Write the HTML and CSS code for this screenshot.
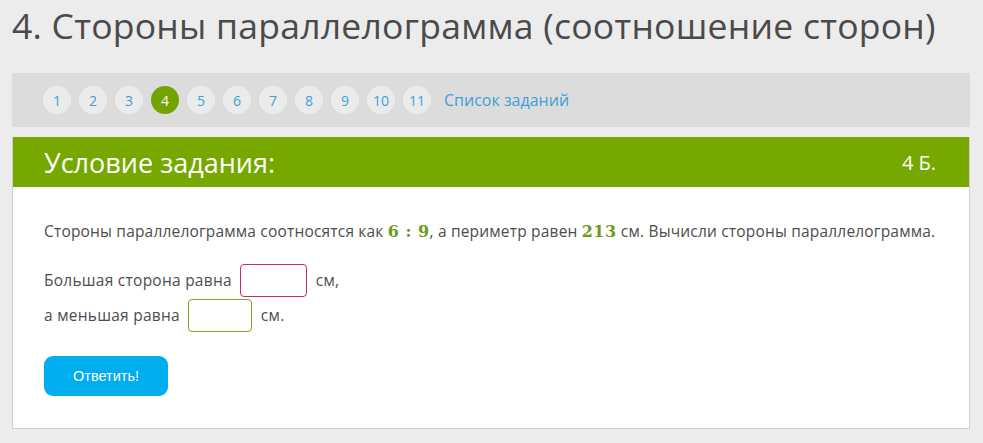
FILE: index.html
```html
<!DOCTYPE html>
<html lang="ru">
<head>
<meta charset="utf-8">
<title>Стороны параллелограмма</title>
<link rel="stylesheet" href="styles.css">
</head>
<body>
<div class="page">
  <h1 class="title">4. Стороны параллелограмма (соотношение сторон)</h1>
  <nav class="tasks">
    <a class="num">1</a>
    <a class="num">2</a>
    <a class="num">3</a>
    <a class="num active">4</a>
    <a class="num">5</a>
    <a class="num">6</a>
    <a class="num">7</a>
    <a class="num">8</a>
    <a class="num">9</a>
    <a class="num">10</a>
    <a class="num">11</a>
    <a class="list">Список заданий</a>
  </nav>
  <section class="card">
    <header class="card-head">
      <span class="head-title">Условие задания:</span>
      <span class="head-score">4 Б.</span>
    </header>
    <div class="card-body">
      <p class="task">Стороны параллелограмма соотносятся как <span class="m">6 : 9</span>, а периметр равен <span class="m">213</span> см. Вычисли стороны параллелограмма.</p>
      <div class="answer">
        <div class="row">Большая сторона равна <span class="box pink"></span> см,</div>
        <div class="row">а меньшая равна <span class="box green"></span> см.</div>
      </div>
      <button class="btn">Ответить!</button>
    </div>
  </section>
</div>
</body>
</html>
```
FILE: styles.css
```css
html, body {
  margin: 0;
  padding: 0;
  background: #ececec;
}
body {
  font-family: "Open Sans", "Noto Sans", sans-serif;
  color: #4d4d4d;
}
.page {
  padding: 0 13px 0 12px;
}
.title {
  margin: 0;
  padding: 0;
  font-weight: 400;
  font-size: 35.5px;
  line-height: 50px;
  color: #4a4a4a;
  letter-spacing: 0.25px;
  white-space: nowrap;
}
.tasks {
  margin-top: 23px;
  height: 54px;
  background: #dcdcdc;
  display: flex;
  align-items: center;
  gap: 8px;
  padding-left: 31px;
}
.num {
  width: 28px;
  height: 28px;
  border-radius: 50%;
  background: #ebebeb;
  display: flex;
  align-items: center;
  justify-content: center;
  font-size: 14px;
  color: #3b9fd8;
}
.num.active {
  background: #72a400;
  color: #ffffff;
}
.list {
  margin-left: 5px;
  font-size: 16px;
  color: #3b9fd8;
}
.card {
  margin-top: 10px;
  background: #ffffff;
  border: 1px solid #cfcfcf;
  border-top: 0;
}
.card-head {
  height: 50px;
  background: #76a800;
  display: flex;
  align-items: center;
  justify-content: space-between;
  padding: 0 33px 0 31px;
  color: #ffffff;
}
.head-title {
  font-size: 27px;
}
.head-score {
  font-size: 20px;
}
.card-body {
  padding: 33px 32px 32px 31px;
}
.task {
  margin: 0;
  font-size: 15.5px;
  letter-spacing: 0.18px;
  line-height: 22px;
  white-space: nowrap;
}
.m {
  font-family: "DejaVu Serif", "Liberation Serif", serif;
  font-weight: bold;
  color: #6b9a1c;
  font-size: 16px;
  letter-spacing: 0.5px;
}
.answer {
  margin-top: 20px;
  font-size: 15.5px;
  letter-spacing: 0.25px;
}
.row {
  display: flex;
  align-items: center;
  gap: 8px;
  height: 34px;
}
.row + .row {
  margin-top: 1px;
}
.box {
  display: inline-block;
  box-sizing: border-box;
  height: 33px;
  border-radius: 4px;
  margin-right: 1px;
}
.box.pink {
  width: 67px;
  border: 1px solid #c4267c;
}
.box.green {
  width: 64px;
  border: 1px solid #7aa52a;
}
.btn {
  margin-top: 24px;
  width: 124px;
  height: 40px;
  border: 0;
  border-radius: 9px;
  background: #00aeef;
  color: #ffffff;
  font-family: "Liberation Sans", Arial, sans-serif;
  font-size: 14.5px;
  display: block;
}
```
